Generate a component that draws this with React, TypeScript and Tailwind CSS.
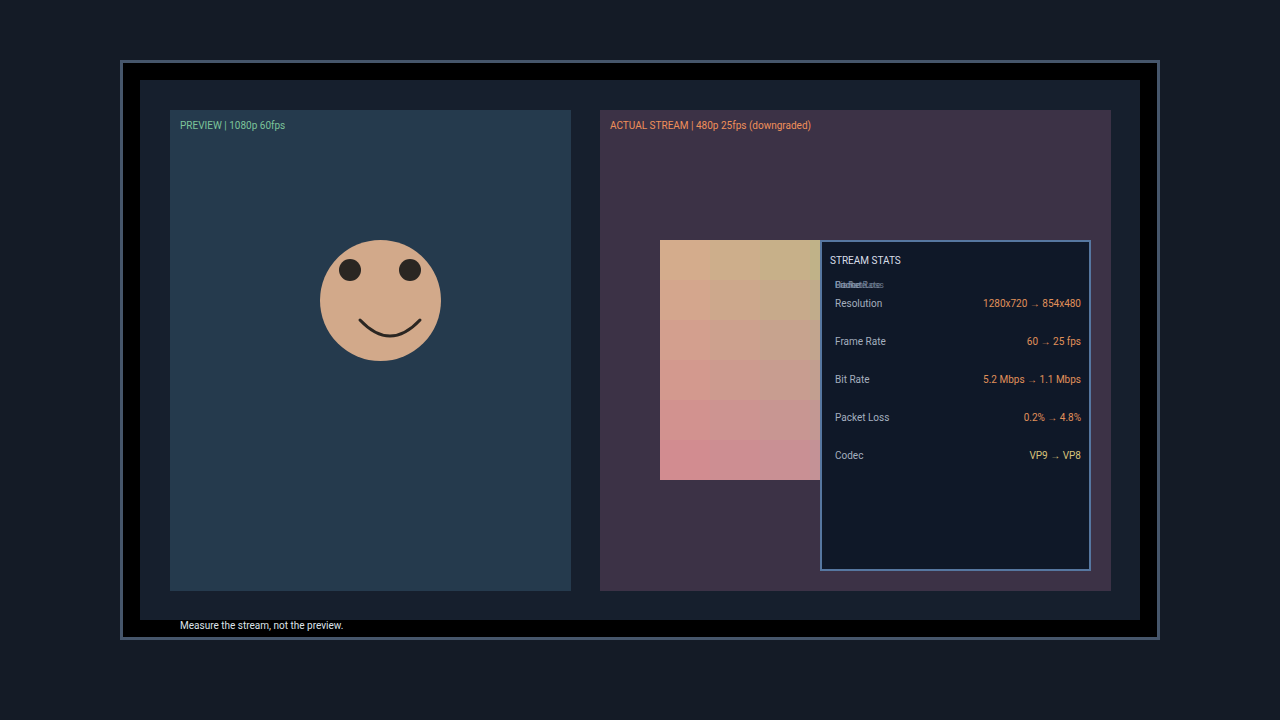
export default function App() {
  const rows = 6, cols = 4;
  const cells = [];
  for (let r = 0; r < rows; r++) for (let c = 0; c < cols; c++) {
    const t = r / (rows - 1), u = c / (cols - 1);
    const R = Math.round(212 - 2 * t - 20 * u * (1 - t) - 14 * u * t);
    const G = Math.round(172 - 32 * t + 6 * u);
    const B = Math.round(140 + 4 * t - 4 * u * (1 - t) + 6 * u * t);
    cells.push(<div key={r + "-" + c} style={{ background: `rgb(${R},${G},${B})` }} />);
  }
  const stats: [string, string, string][] = [
    ["Resolution", "1280x720 → 854x480", "text-[#e0905a]"],
    ["Frame Rate", "60 → 25 fps", "text-[#e0905a]"],
    ["Bit Rate", "5.2 Mbps → 1.1 Mbps", "text-[#e0905a]"],
    ["Packet Loss", "0.2% → 4.8%", "text-[#e0905a]"],
    ["Codec", "VP9 → VP8", "text-[#d8c27a]"],
  ];
  return (
    <div className="w-[1280px] h-[720px] bg-[#141b26] pt-[60px] pl-[120px]" style={{ fontFamily: "Roboto, 'Liberation Sans', sans-serif" }}>
      <div className="w-[1040px] h-[580px] border-[3px] border-[#46566b] bg-black p-[17px]">
        <div className="w-[1000px] h-[540px] bg-[#161f2d] pt-[30px] pl-[30px] flex flex-col">
          <div className="flex gap-[29px]">
            <div className="w-[401px] h-[481px] bg-[#253a4d] p-[10px] flex flex-col">
              <div className="text-[10px] leading-[12px] text-[#7cc49a]">PREVIEW | 1080p 60fps</div>
              <svg className="ml-[140px] mt-[108px]" width="121" height="121" viewBox="0 0 121 121">
                <circle cx="60.5" cy="60.5" r="60.5" fill="#d2a98a" />
                <circle cx="30" cy="30" r="11" fill="#2a2622" />
                <circle cx="90" cy="30" r="11" fill="#2a2622" />
                <path d="M40 80 Q70 112 100 80" fill="none" stroke="#2a2622" strokeWidth="3" strokeLinecap="round" />
              </svg>
            </div>
            <div className="w-[511px] h-[481px] bg-[#3c3246] pt-[10px] flex flex-col">
              <div className="pl-[10px] text-[10px] leading-[12px] text-[#f0905a]">ACTUAL STREAM | 480p 25fps (downgraded)</div>
              <div className="mt-[108px] ml-[60px] flex">
                <div className="w-[160px] h-[240px] overflow-hidden">
                  <div className="w-[200px] h-[240px] grid grid-cols-4 grid-rows-6">{cells}</div>
                </div>
                <div className="w-[271px] h-[331px] border-2 border-[#5677a0] bg-[#0f1828] px-[8px] pt-[13px] flex flex-col">
                  <div className="text-[10px] leading-[12px] text-[#d8dee8]">STREAM STATS</div>
                  <div className="relative ml-[5px] mt-[12px] h-[12px] text-[9px] text-[#8a9ab0]">
                    <span className="absolute left-0 top-0 opacity-70">Codec</span>
                    <span className="absolute left-0 top-0 opacity-70">Bit Rate</span>
                    <span className="absolute left-0 top-0 opacity-70">Packet Loss</span>
                    <span className="absolute left-0 top-0 opacity-70">Frame Rate</span>
                  </div>
                  <div className="ml-[5px] mt-[7px] flex flex-col gap-[26px]">
                    {stats.map(([k, v, c]) => (
                      <div key={k} className="flex text-[10px] leading-[12px]">
                        <span className="w-[195px] text-[#a4afbf]">{k}</span>
                        <span className={"whitespace-nowrap " + c}>{v}</span>
                      </div>
                    ))}
                  </div>
                </div>
              </div>
            </div>
          </div>
          <div className="pl-[10px] mt-[29px] text-[10px] leading-[12px] text-[#dde3ea]">Measure the stream, not the preview.</div>
        </div>
      </div>
    </div>
  );
}
